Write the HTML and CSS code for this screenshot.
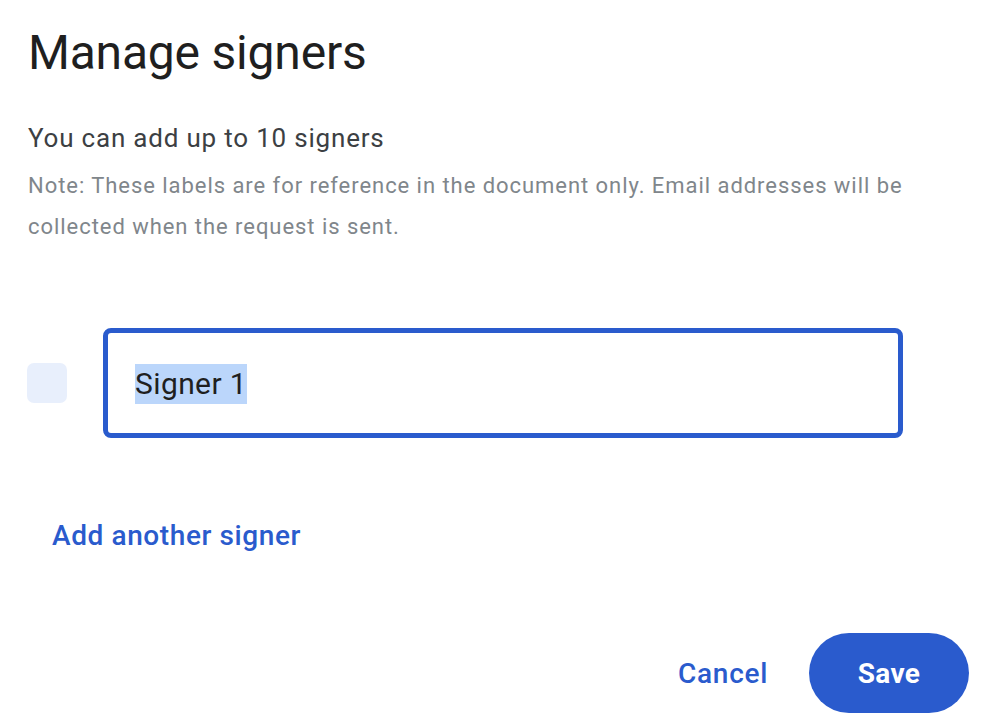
FILE: index.html
```html
<!DOCTYPE html>
<html>
<head>
<meta charset="utf-8">
<link rel="stylesheet" href="styles.css">
</head>
<body>
<div class="dialog">
  <h1 class="title">Manage signers</h1>
  <p class="subtitle">You can add up to 10 signers</p>
  <p class="note">Note: These labels are for reference in the document only. Email addresses will be collected when the request is sent.</p>
  <div class="signer-row">
    <div class="swatch"></div>
    <div class="field"><span class="sel">Signer 1</span></div>
  </div>
  <div class="add-row"><span class="add-link">Add another signer</span></div>
  <div class="actions">
    <span class="cancel">Cancel</span>
    <span class="save">Save</span>
  </div>
</div>
</body>
</html>
```
FILE: styles.css
```css
html, body {
  margin: 0;
  padding: 0;
  background: #ffffff;
}
body {
  font-family: Roboto, "Noto Sans", Arial, sans-serif;
  color: #1f1f1f;
}
.dialog {
  width: 996px;
  height: 724px;
  box-sizing: border-box;
  padding: 18px 27px 0 28px;
  display: flex;
  flex-direction: column;
}
.title {
  margin: 0;
  font-size: 48px;
  font-weight: 400;
  line-height: 70px;
  color: #1f1f1f;
  letter-spacing: -0.2px;
}
.subtitle {
  margin: 32px 0 0 0;
  font-size: 26px;
  line-height: 36px;
  color: #3c4043;
  letter-spacing: 0.8px;
}
.note {
  margin: 9px 0 0 0;
  font-size: 22px;
  line-height: 41px;
  color: #80868b;
  width: 910px;
  letter-spacing: 0.95px;
}
.signer-row {
  margin-top: 81px;
  display: flex;
  align-items: center;
  gap: 36px;
}
.swatch {
  width: 40px;
  height: 40px;
  border-radius: 7px;
  background: #e8effc;
  margin-left: -1px;
}
.field {
  width: 800px;
  height: 110px;
  box-sizing: border-box;
  border: 5px solid #2a5bcd;
  border-radius: 8px;
  display: flex;
  align-items: center;
  padding-left: 27px;
}
.sel {
  background: #bbd6fb;
  font-size: 30px;
  line-height: 40px;
  color: #1f1f1f;
  letter-spacing: 0.4px;
  margin-top: 2px;
}
.add-row {
  margin-top: 78px;
  padding-left: 24px;
}
.add-link {
  font-size: 28px;
  font-weight: 500;
  line-height: 40px;
  color: #2a5bcd;
  letter-spacing: 0.6px;
}
.actions {
  margin-top: 77px;
  display: flex;
  justify-content: flex-end;
  align-items: center;
  gap: 41px;
}
.cancel {
  font-size: 28px;
  font-weight: 500;
  color: #2a5bcd;
  letter-spacing: 0.7px;
}
.save {
  width: 160px;
  height: 80px;
  border-radius: 40px;
  background: #2a5bcd;
  color: #ffffff;
  font-size: 28px;
  font-weight: 700;
  letter-spacing: 0.3px;
  display: flex;
  align-items: center;
  justify-content: center;
}
```
